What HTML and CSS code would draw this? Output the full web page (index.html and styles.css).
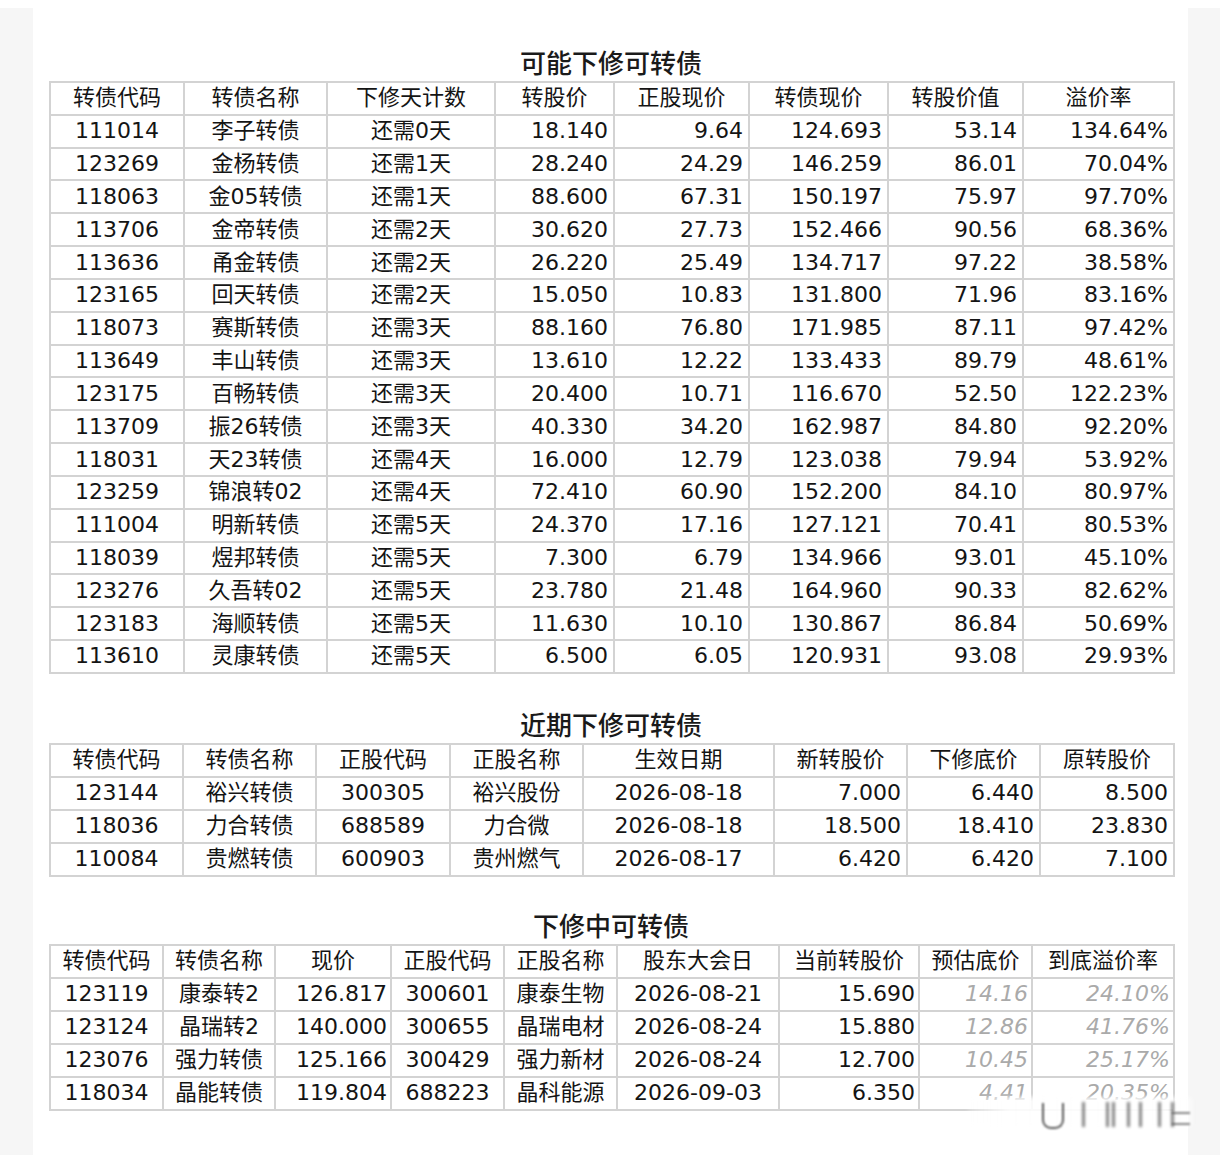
FILE: index.html
```html
<!DOCTYPE html>
<html lang="zh-CN">
<head>
<meta charset="utf-8">
<title>可转债下修</title>
<link rel="stylesheet" href="styles.css">
</head>
<body>
<div class="frame">
  <main class="page">
    <section class="block block-1">
      <h2 class="title">可能下修可转债</h2>
      <table class="grid t1">
        <colgroup>
          <col style="width:134px"><col style="width:143px"><col style="width:168px"><col style="width:119px"><col style="width:135px"><col style="width:139px"><col style="width:135px"><col style="width:151px">
        </colgroup>
        <thead>
          <tr><th>转债代码</th><th>转债名称</th><th>下修天计数</th><th>转股价</th><th>正股现价</th><th>转债现价</th><th>转股价值</th><th>溢价率</th></tr>
        </thead>
        <tbody>
          <tr><td class="c">111014</td><td class="c">李子转债</td><td class="c">还需0天</td><td class="r">18.140</td><td class="r">9.64</td><td class="r">124.693</td><td class="r">53.14</td><td class="r">134.64%</td></tr>
          <tr><td class="c">123269</td><td class="c">金杨转债</td><td class="c">还需1天</td><td class="r">28.240</td><td class="r">24.29</td><td class="r">146.259</td><td class="r">86.01</td><td class="r">70.04%</td></tr>
          <tr><td class="c">118063</td><td class="c">金05转债</td><td class="c">还需1天</td><td class="r">88.600</td><td class="r">67.31</td><td class="r">150.197</td><td class="r">75.97</td><td class="r">97.70%</td></tr>
          <tr><td class="c">113706</td><td class="c">金帝转债</td><td class="c">还需2天</td><td class="r">30.620</td><td class="r">27.73</td><td class="r">152.466</td><td class="r">90.56</td><td class="r">68.36%</td></tr>
          <tr><td class="c">113636</td><td class="c">甬金转债</td><td class="c">还需2天</td><td class="r">26.220</td><td class="r">25.49</td><td class="r">134.717</td><td class="r">97.22</td><td class="r">38.58%</td></tr>
          <tr><td class="c">123165</td><td class="c">回天转债</td><td class="c">还需2天</td><td class="r">15.050</td><td class="r">10.83</td><td class="r">131.800</td><td class="r">71.96</td><td class="r">83.16%</td></tr>
          <tr><td class="c">118073</td><td class="c">赛斯转债</td><td class="c">还需3天</td><td class="r">88.160</td><td class="r">76.80</td><td class="r">171.985</td><td class="r">87.11</td><td class="r">97.42%</td></tr>
          <tr><td class="c">113649</td><td class="c">丰山转债</td><td class="c">还需3天</td><td class="r">13.610</td><td class="r">12.22</td><td class="r">133.433</td><td class="r">89.79</td><td class="r">48.61%</td></tr>
          <tr><td class="c">123175</td><td class="c">百畅转债</td><td class="c">还需3天</td><td class="r">20.400</td><td class="r">10.71</td><td class="r">116.670</td><td class="r">52.50</td><td class="r">122.23%</td></tr>
          <tr><td class="c">113709</td><td class="c">振26转债</td><td class="c">还需3天</td><td class="r">40.330</td><td class="r">34.20</td><td class="r">162.987</td><td class="r">84.80</td><td class="r">92.20%</td></tr>
          <tr><td class="c">118031</td><td class="c">天23转债</td><td class="c">还需4天</td><td class="r">16.000</td><td class="r">12.79</td><td class="r">123.038</td><td class="r">79.94</td><td class="r">53.92%</td></tr>
          <tr><td class="c">123259</td><td class="c">锦浪转02</td><td class="c">还需4天</td><td class="r">72.410</td><td class="r">60.90</td><td class="r">152.200</td><td class="r">84.10</td><td class="r">80.97%</td></tr>
          <tr><td class="c">111004</td><td class="c">明新转债</td><td class="c">还需5天</td><td class="r">24.370</td><td class="r">17.16</td><td class="r">127.121</td><td class="r">70.41</td><td class="r">80.53%</td></tr>
          <tr><td class="c">118039</td><td class="c">煜邦转债</td><td class="c">还需5天</td><td class="r">7.300</td><td class="r">6.79</td><td class="r">134.966</td><td class="r">93.01</td><td class="r">45.10%</td></tr>
          <tr><td class="c">123276</td><td class="c">久吾转02</td><td class="c">还需5天</td><td class="r">23.780</td><td class="r">21.48</td><td class="r">164.960</td><td class="r">90.33</td><td class="r">82.62%</td></tr>
          <tr><td class="c">123183</td><td class="c">海顺转债</td><td class="c">还需5天</td><td class="r">11.630</td><td class="r">10.10</td><td class="r">130.867</td><td class="r">86.84</td><td class="r">50.69%</td></tr>
          <tr><td class="c">113610</td><td class="c">灵康转债</td><td class="c">还需5天</td><td class="r">6.500</td><td class="r">6.05</td><td class="r">120.931</td><td class="r">93.08</td><td class="r">29.93%</td></tr>
        </tbody>
      </table>
    </section>

    <section class="block block-2">
      <h2 class="title">近期下修可转债</h2>
      <table class="grid t2">
        <colgroup>
          <col style="width:133px"><col style="width:133px"><col style="width:134px"><col style="width:133px"><col style="width:191px"><col style="width:133px"><col style="width:133px"><col style="width:134px">
        </colgroup>
        <thead>
          <tr><th>转债代码</th><th>转债名称</th><th>正股代码</th><th>正股名称</th><th>生效日期</th><th>新转股价</th><th>下修底价</th><th>原转股价</th></tr>
        </thead>
        <tbody>
          <tr><td class="c">123144</td><td class="c">裕兴转债</td><td class="c">300305</td><td class="c">裕兴股份</td><td class="c">2026-08-18</td><td class="r">7.000</td><td class="r">6.440</td><td class="r">8.500</td></tr>
          <tr><td class="c">118036</td><td class="c">力合转债</td><td class="c">688589</td><td class="c">力合微</td><td class="c">2026-08-18</td><td class="r">18.500</td><td class="r">18.410</td><td class="r">23.830</td></tr>
          <tr><td class="c">110084</td><td class="c">贵燃转债</td><td class="c">600903</td><td class="c">贵州燃气</td><td class="c">2026-08-17</td><td class="r">6.420</td><td class="r">6.420</td><td class="r">7.100</td></tr>
        </tbody>
      </table>
    </section>

    <section class="block block-3">
      <h2 class="title">下修中可转债</h2>
      <table class="grid t3">
        <colgroup>
          <col style="width:113px"><col style="width:112px"><col style="width:116px"><col style="width:113px"><col style="width:113px"><col style="width:162px"><col style="width:140px"><col style="width:113px"><col style="width:142px">
        </colgroup>
        <thead>
          <tr><th>转债代码</th><th>转债名称</th><th>现价</th><th>正股代码</th><th>正股名称</th><th>股东大会日</th><th>当前转股价</th><th>预估底价</th><th>到底溢价率</th></tr>
        </thead>
        <tbody>
          <tr><td class="c">123119</td><td class="c">康泰转2</td><td class="r">126.817</td><td class="c">300601</td><td class="c">康泰生物</td><td class="c">2026-08-21</td><td class="r">15.690</td><td class="r est">14.16</td><td class="r est">24.10%</td></tr>
          <tr><td class="c">123124</td><td class="c">晶瑞转2</td><td class="r">140.000</td><td class="c">300655</td><td class="c">晶瑞电材</td><td class="c">2026-08-24</td><td class="r">15.880</td><td class="r est">12.86</td><td class="r est">41.76%</td></tr>
          <tr><td class="c">123076</td><td class="c">强力转债</td><td class="r">125.166</td><td class="c">300429</td><td class="c">强力新材</td><td class="c">2026-08-24</td><td class="r">12.700</td><td class="r est">10.45</td><td class="r est">25.17%</td></tr>
          <tr><td class="c">118034</td><td class="c">晶能转债</td><td class="r">119.804</td><td class="c">688223</td><td class="c">晶科能源</td><td class="c">2026-09-03</td><td class="r">6.350</td><td class="r est">4.41</td><td class="r est">20.35%</td></tr>
        </tbody>
      </table>
      <div class="watermark" aria-hidden="true">
        <span class="wm-fade"></span>
        <span class="wm-u"></span>
        <span class="wm-bar b1"></span>
        <span class="wm-bar b2"></span>
        <span class="wm-bar b3"></span>
        <span class="wm-bar b4"></span>
        <span class="wm-bar b5"></span>
        <span class="wm-bar b6"></span>
        <span class="wm-bar b7"></span>
        <span class="wm-line l1"></span>
        <span class="wm-line l2"></span>
      </div>
    </section>
  </main>
</div>
</body>
</html>
```

FILE: styles.css
```css
html {
  background: #ffffff;
}

body {
  margin: 0;
  font-family: "DejaVu Sans", "Noto Sans CJK SC", sans-serif;
  color: #141414;
}

.frame {
  margin-top: 8px;
  background: #f6f6f6;
  padding: 0 32px 0 33px;
}

.page {
  background: #ffffff;
  min-height: 1147px;
  padding-top: 41px;
  box-sizing: border-box;
}

.block {
  position: relative;
  width: 1124px;
  margin: 0 auto;
  padding-left: 1px;
}

.block-2 {
  margin-top: 37px;
}

.block-3 {
  margin-top: 35px;
}

.title {
  margin: 0 0 2px;
  font-family: "DejaVu Sans", "Noto Sans CJK SC", sans-serif;
  font-size: 26px;
  line-height: 30px;
  font-weight: 500;
  text-align: center;
  color: #1a1a1a;
}

.grid {
  width: 1124px;
  table-layout: fixed;
  border-collapse: collapse;
  font-size: 22px;
}

.grid th,
.grid td {
  border: 2px solid #d3d3d3;
  padding: 0 5px;
  height: 33px;
  box-sizing: border-box;
  white-space: nowrap;
  overflow: hidden;
  vertical-align: middle;
  line-height: 28px;
  font-weight: 400;
}

.t1 th,
.t1 td {
  height: 32.83px;
}

.grid th {
  text-align: center;
}

.grid .c {
  text-align: center;
}

.grid .r {
  text-align: right;
}

.grid .est {
  font-style: italic;
  color: #aaaaaa;
}

.t3 th,
.t3 td {
  padding: 0 3px;
}

/* blurred watermark overlay in the lower right corner */
.watermark {
  position: absolute;
  left: 920px;
  top: 185px;
  width: 224px;
  height: 34px;
  pointer-events: none;
}

.wm-fade {
  position: absolute;
  left: 0;
  top: 0;
  width: 224px;
  height: 30px;
  background: linear-gradient(90deg, rgba(255,255,255,0.2), rgba(255,255,255,0.88) 18%, rgba(255,255,255,0.92) 85%, rgba(255,255,255,0.5));
  filter: blur(2px);
}

.wm-u {
  position: absolute;
  left: 74px;
  top: 6px;
  width: 18px;
  height: 24px;
  border: 2px solid #222;
  border-top: none;
  border-radius: 0 0 9px 9px;
  filter: blur(1.2px);
  opacity: 0.75;
}

.wm-bar {
  position: absolute;
  top: 5px;
  width: 3px;
  height: 25px;
  background: #333;
  filter: blur(1.6px);
  opacity: 0.6;
}

.b1 { left: 114px; }
.b2 { left: 138px; }
.b3 { left: 144px; }
.b4 { left: 159px; }
.b5 { left: 171px; }
.b6 { left: 190px; }
.b7 { left: 203px; }

.wm-line {
  position: absolute;
  left: 204px;
  width: 18px;
  height: 2px;
  background: #444;
  filter: blur(1px);
  opacity: 0.65;
}

.l1 { top: 15px; }
.l2 { top: 26px; }
```
